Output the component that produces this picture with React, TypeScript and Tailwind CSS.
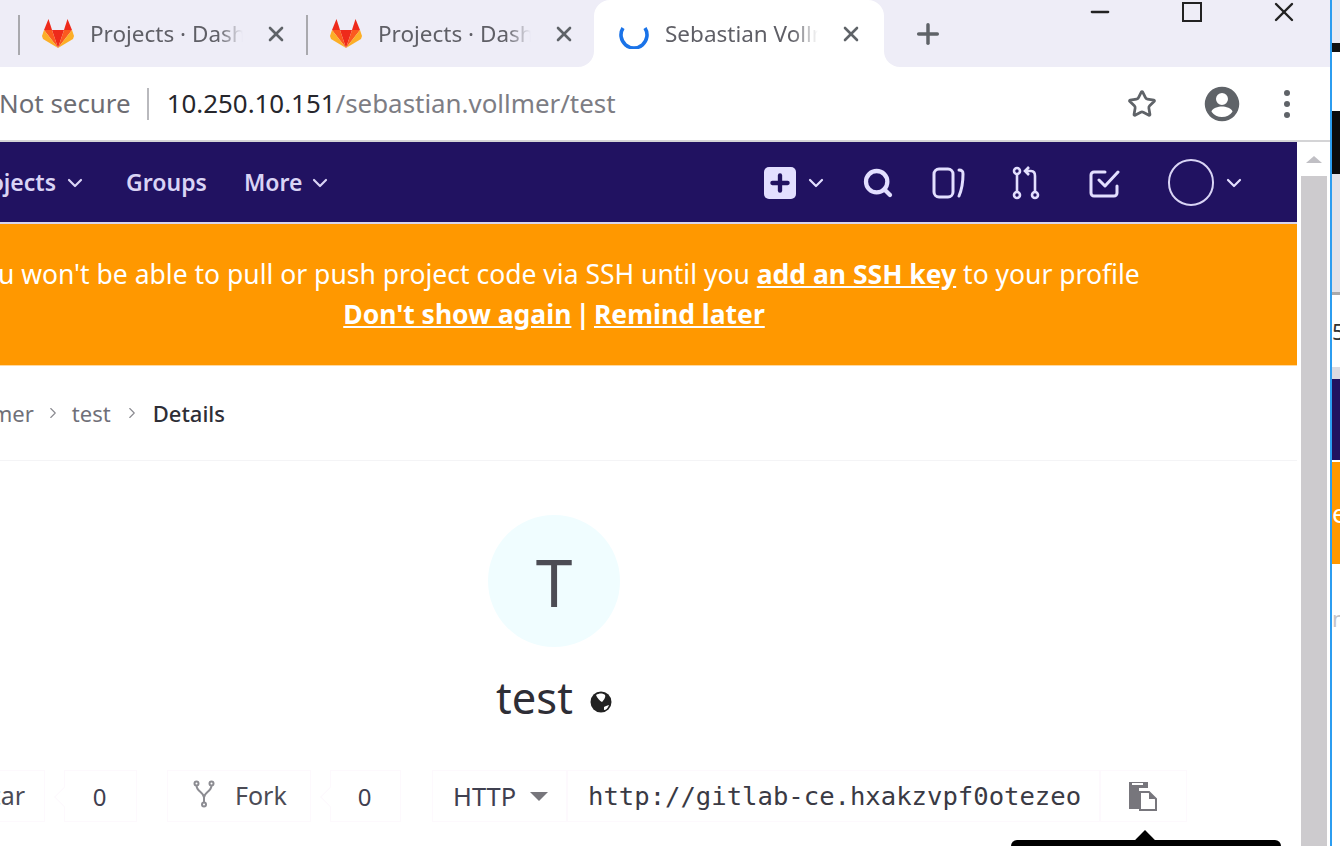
import { X, Plus, Star, Search, ChevronDown, ChevronRight, Minus } from "lucide-react";

const sans = "font-['Noto_Sans','Open_Sans',sans-serif]";

function Fox() {
  return (
    <svg width="32" height="30" viewBox="0 0 32 30" className="shrink-0">
      <polygon points="16,29 22,11 10,11" fill="#ee2a1b" />
      <polygon points="16,29 10,11 2,11" fill="#fb5a1f" />
      <polygon points="2,11 0,17 1,20 16,29" fill="#fcae26" />
      <polygon points="2,11 10,11 6.5,0" fill="#ee2a1b" />
      <polygon points="16,29 22,11 30,11" fill="#fb5a1f" />
      <polygon points="30,11 32,17 31,20 16,29" fill="#fcae26" />
      <polygon points="30,11 22,11 25.5,0" fill="#ee2a1b" />
    </svg>
  );
}

function Spinner() {
  return (
    <svg width="30" height="30" viewBox="0 0 30 30" className="shrink-0">
      <path d="M4 9 A13 13 0 1 0 26 9" fill="none" stroke="#1a73e8" strokeWidth="3.6" strokeLinecap="butt" />
    </svg>
  );
}

function Tab({ label, active, last }: { label: string; active?: boolean; last?: boolean }) {
  return (
    <div
      className={
        active
          ? "flex h-[67px] w-[290px] shrink-0 items-center rounded-t-[16px] bg-white pl-[25px]"
          : last
            ? "relative flex h-[67px] w-[288px] shrink-0 items-center rounded-br-[16px] bg-[#eeedf7] pl-[24px]"
            : "relative flex h-[67px] w-[288px] shrink-0 items-center bg-[#eeedf7] pl-[24px]"
      }
    >
      {!active && <div className="absolute left-0 top-[15px] h-[40px] w-[2px] bg-[#a9a9ae]" />}
      {active ? <Spinner /> : <Fox />}
      <span className="ml-[16px] w-[156px] overflow-hidden whitespace-nowrap text-[22.5px] text-[#5f5f66] [mask-image:linear-gradient(to_right,black_82%,transparent_98%)]">
        {label}
      </span>
      <X size={24} strokeWidth={2.6} className="ml-[18px] text-[#5f6368]" />
    </div>
  );
}

function CountBox({ value, width }: { value: string; width: string }) {
  return (
    <div className={`relative flex h-[52px] items-center justify-center border border-[#fdf9fd] text-[24px] text-[#3f4050] ${width}`}>
      <div className="absolute -left-[8px] top-[19px] h-[14px] w-[14px] rotate-45 border-b border-l border-[#fdf9fd] bg-white" />
      <span className="relative right-[1px] top-[1px]">{value}</span>
    </div>
  );
}

function Strip() {
  return (
    <div className="flex h-full w-[10px] shrink-0 flex-col">
      <div className="flex h-full border-l-[2px] border-[#2c9df0]">
        <div className="flex w-[8px] flex-col overflow-hidden">
          <div className="h-[43px] bg-[#e9eaf3]" />
          <div className="h-[9px] bg-[#111111]" />
          <div className="h-[59px] bg-white" />
          <div className="h-[63px] bg-[#0b0b0d]" />
          <div className="h-[121px] border-b-[3px] border-[#a9a9ab] bg-[#e3e2e8]" />
          <div className="flex h-[72px] items-center overflow-hidden whitespace-nowrap bg-white text-[22px] leading-none text-[#333]">5</div>
          <div className="h-[12px] bg-[#dcdbe1]" />
          <div className="h-[81px] bg-[#211261]" />
          <div className="h-[2px] bg-white" />
          <div className="flex h-[102px] items-center overflow-hidden bg-[#ff9800] text-[26px] text-white">e</div>
          <div className="flex h-[100px] items-center overflow-hidden bg-white pt-[8px] text-[22px] text-[#c4c4c8]">n</div>
          <div className="flex-1 bg-white" />
        </div>
      </div>
    </div>
  );
}

export default function App() {
  return (
    <div className={`flex h-[846px] w-[1340px] overflow-hidden bg-white ${sans}`}>
      <div className="flex h-full w-[1330px] shrink-0 flex-col">
        {/* Tab strip */}
        <div className="flex h-[67px] shrink-0 bg-[linear-gradient(#eeedf7_50%,white_50%)]">
          <div className="h-[67px] w-[18px] shrink-0 bg-[#eeedf7]" />
          <Tab label="Projects · Dashboard" />
          <Tab label="Projects · Dashboard" last />
          <Tab label="Sebastian Vollmer" active />
          <div className="flex h-[67px] flex-1 rounded-bl-[16px] bg-[#eeedf7]">
            <div className="flex h-[67px] w-[88px] items-center justify-center">
              <Plus size={32} strokeWidth={2.6} className="text-[#5f6368]" />
            </div>
            <div className="ml-auto flex items-start">
              <div className="flex h-[24px] w-[92px] items-center justify-center"><Minus size={28} strokeWidth={2} className="text-[#222]" /></div>
              <div className="flex h-[24px] w-[92px] items-center justify-center"><div className="h-[20px] w-[20px] border-[2px] border-[#222]" /></div>
              <div className="flex h-[24px] w-[92px] items-center justify-center"><X size={32} strokeWidth={1.8} className="text-[#222]" /></div>
            </div>
          </div>
        </div>

        {/* Address bar */}
        <div className="flex h-[75px] shrink-0 items-center border-b-[2px] border-[#d4d4d6] bg-white text-[25.9px]">
          <span className="-ml-[1px] whitespace-nowrap text-[#6d6d73]">Not secure</span>
          <div className="ml-[16px] h-[32px] w-[2px] bg-[#b9b9bd]" />
          <span className="ml-[18px] whitespace-nowrap text-[#26262c]">
            10.250.10.151<span className="text-[#7d7d84]">/sebastian.vollmer/test</span>
          </span>
          <div className="ml-auto flex items-center">
            <Star size={30} strokeWidth={2.2} className="text-[#5f6368]" />
            <svg width="36" height="36" viewBox="0 0 24 24" className="ml-[47px]">
              <path fill="#5f6368" d="M12 0.5a11.5 11.5 0 1 0 0 23a11.5 11.5 0 0 0 0-23zm0 4.2a4 4 0 1 1 0 8a4 4 0 0 1 0-8zm0 16a8.8 8.8 0 0 1-7-3.6c.2-2.3 4.7-3.5 7-3.5s6.8 1.2 7 3.5a8.8 8.8 0 0 1-7 3.6z" />
            </svg>
            <div className="ml-[44px] mr-[40px] flex flex-col gap-[5px]">
              <div className="h-[6px] w-[6px] rounded-full bg-[#5f6368]" />
              <div className="h-[6px] w-[6px] rounded-full bg-[#5f6368]" />
              <div className="h-[6px] w-[6px] rounded-full bg-[#5f6368]" />
            </div>
          </div>
        </div>

        <div className="flex min-h-0 flex-1">
          {/* Page */}
          <div className="w-[1297px] min-w-0 shrink-0 overflow-hidden">
            <div className="-ml-[189px] w-[1486px]">
              {/* Nav */}
              <div className="flex h-[82px] items-center border-b-[2px] border-[#d9d5ee] bg-[#211261] pl-[189px] pt-[1px] text-[23px] font-semibold text-[#d9d4f5]">
                <div className="-ml-[34px] flex items-center">
                  <span>Projects</span>
                  <ChevronDown size={24} strokeWidth={2.2} className="ml-[7px]" />
                </div>
                <span className="ml-[39px]">Groups</span>
                <span className="ml-[37px]">More</span>
                <ChevronDown size={24} strokeWidth={2.2} className="ml-[6px]" />
                <div className="ml-auto mr-[51px] flex items-center text-[#e3dfff]">
                  <div className="flex h-[32px] w-[32px] items-center justify-center rounded-[5px] bg-[#e3dfff]">
                    <Plus size={26} strokeWidth={4} className="text-[#211261]" />
                  </div>
                  <ChevronDown size={24} strokeWidth={2.2} className="ml-[8px]" />
                  <Search size={32} strokeWidth={3.2} className="ml-[34px]" />
                  <svg width="34" height="34" viewBox="0 0 34 34" fill="none" stroke="currentColor" strokeWidth="3" className="ml-[38px]">
                    <rect x="2" y="3" width="19" height="28" rx="5" />
                    <path d="M27 4c3 0 4 1 4 4c0 8-1 15-4 22" strokeLinecap="round" />
                  </svg>
                  <svg width="28" height="34" viewBox="0 0 28 34" fill="none" stroke="currentColor" strokeWidth="2.6" className="ml-[46px]">
                    <circle cx="5" cy="5" r="3" />
                    <circle cx="5" cy="29" r="3" />
                    <circle cx="23" cy="29" r="3" />
                    <path d="M5 8v18M23 26V10c0-3-1-5-4-5h-5M17 1l-4 4l4 4" />
                  </svg>
                  <svg width="32" height="32" viewBox="0 0 32 32" fill="none" stroke="currentColor" strokeWidth="3" strokeLinecap="round" strokeLinejoin="round" className="ml-[48px]">
                    <path d="M17 5H6a3 3 0 0 0-3 3v18a3 3 0 0 0 3 3h20a3 3 0 0 0 3-3v-7" />
                    <path d="M11 13l6 6L30 5" />
                  </svg>
                  <div className="ml-[48px] h-[47px] w-[46px] rounded-full border-[2px] border-[#d9d4f5]" />
                  <ChevronDown size={24} strokeWidth={2.2} className="ml-[8px]" />
                </div>
              </div>

              {/* Alert */}
              <div className="flex h-[142px] flex-col items-center justify-center border-b border-[#ffd9a0] bg-[#ff9800] pb-[2px] text-[26.5px] leading-[40px] text-white">
                <div className="whitespace-nowrap">
                  You won't be able to pull or push project code via SSH until you <b className="underline">add an SSH key</b> to your profile
                </div>
                <div className="flex whitespace-nowrap">
                  <b className="underline">Don't show again</b>
                  <b className="mx-[4px]">|</b>
                  <b className="underline">Remind later</b>
                </div>
              </div>

              {/* Breadcrumb */}
              <div className="flex h-[95px] items-center border-b border-[#f4f4f6] text-[22px] text-[#707078]">
                <div className="flex w-[414px] shrink-0 items-center justify-end whitespace-nowrap">
                  <span>Sebastian Vollmer</span>
                  <ChevronRight size={18} strokeWidth={1.5} className="mx-[10px] text-[#8a8a90]" />
                  <span>test</span>
                  <ChevronRight size={18} strokeWidth={1.5} className="mx-[12px] text-[#8a8a90]" />
                  <span className="font-medium text-[#2e2e36]">Details</span>
                </div>
              </div>

              {/* Project header */}
              <div className="flex flex-col items-center pt-[54px]">
                <div className="flex h-[132px] w-[132px] items-center justify-center rounded-full bg-[#f0fdff] text-[66px] text-[#4c4c54]">T</div>
                <div className="mt-[19px] flex h-[64px] items-center text-[43.5px] text-[#2e2e36]">
                  <span>test</span>
                  <svg width="22" height="22" viewBox="0 0 22 22" className="ml-[17px] mt-[8px]">
                    <circle cx="11" cy="11" r="10.5" fill="#222" />
                    <path d="M6 4c3-2 7-2 9 0c1 2-1 5-3 7c-2-1-5-4-6-7zM14 16c1-1 3-1 5-2c-1 3-3 5-5 5z" fill="#fff" />
                  </svg>
                </div>

                {/* Stats row */}
                <div className="mt-[40px] flex items-stretch whitespace-nowrap">
                  <div className="flex h-[52px] w-[124px] items-center justify-end border border-[#fdf9fd] pr-[19px] text-[25px] text-[#4b4b55]">Star</div>
                  <CountBox value="0" width="ml-[19px] w-[73px]" />
                  <div className="ml-[30px] flex h-[52px] w-[144px] items-center border border-[#fdf9fd] pl-[25px] text-[25px] text-[#4b4b55]">
                    <svg width="22" height="28" viewBox="0 0 22 28" fill="none" stroke="#8c8c92" strokeWidth="2" className="-mt-[4px]">
                      <circle cx="3.5" cy="3.5" r="2" />
                      <circle cx="18.5" cy="3.5" r="2" />
                      <circle cx="11" cy="24.5" r="2" />
                      <path d="M3.5 5.5c0 6 7.5 7 7.5 12v5M18.5 5.5c0 6-7.5 7-7.5 12" />
                    </svg>
                    <span className="ml-[20px]">Fork</span>
                  </div>
                  <CountBox value="0" width="ml-[19px] w-[71px]" />
                  <div className="ml-[31px] flex h-[52px] w-[135px] items-center border border-[#fdf9fd] pl-[20px] text-[25.5px] text-[#3f4050]">
                    <span>HTTP</span>
                    <div className="ml-[14px] h-0 w-0 border-x-[9px] border-t-[9px] border-x-transparent border-t-[#77767c]" />
                  </div>
                  <div className="flex h-[52px] w-[533px] items-center overflow-hidden border border-[#fdf9fd] pl-[20px] font-['DejaVu_Sans_Mono',monospace] text-[25.6px] text-[#3a3a44]">
                    http://gitlab-ce.hxakzvpf0otezeo
                  </div>
                  <div className="relative flex h-[52px] w-[87px] items-center justify-center border border-[#fdf9fd]">
                    <svg width="30" height="30" viewBox="0 0 30 30" className="-ml-[2px]">
                      <path fill="#77767c" d="M1 1h19v6h-9v21H1z" />
                      <rect x="4" y="2" width="11" height="2" fill="#fff" />
                      <path fill="#fff" stroke="#77767c" strokeWidth="2" d="M12 11h9l7 7v11H12z" />
                      <path fill="#77767c" d="M21 11v7h7z" />
                    </svg>
                    <div className="absolute left-[-90px] top-[69px] h-[40px] w-[270px] rounded-[6px] bg-black" />
                    <div className="absolute left-[37px] top-[62px] h-[14px] w-[14px] rotate-45 bg-black" />
                  </div>
                </div>
              </div>
            </div>
          </div>

          {/* Scrollbar */}
          <div className="flex h-full w-[33px] shrink-0 flex-col items-center bg-white">
            <div className="flex h-[34px] items-center justify-center">
              <div className="h-0 w-0 border-x-[8px] border-b-[7px] border-x-transparent border-b-[#c0bfc4]" />
            </div>
            <div className="w-[26px] flex-1 bg-[#cdcbce]" />
          </div>
        </div>
      </div>
      <Strip />
    </div>
  );
}
